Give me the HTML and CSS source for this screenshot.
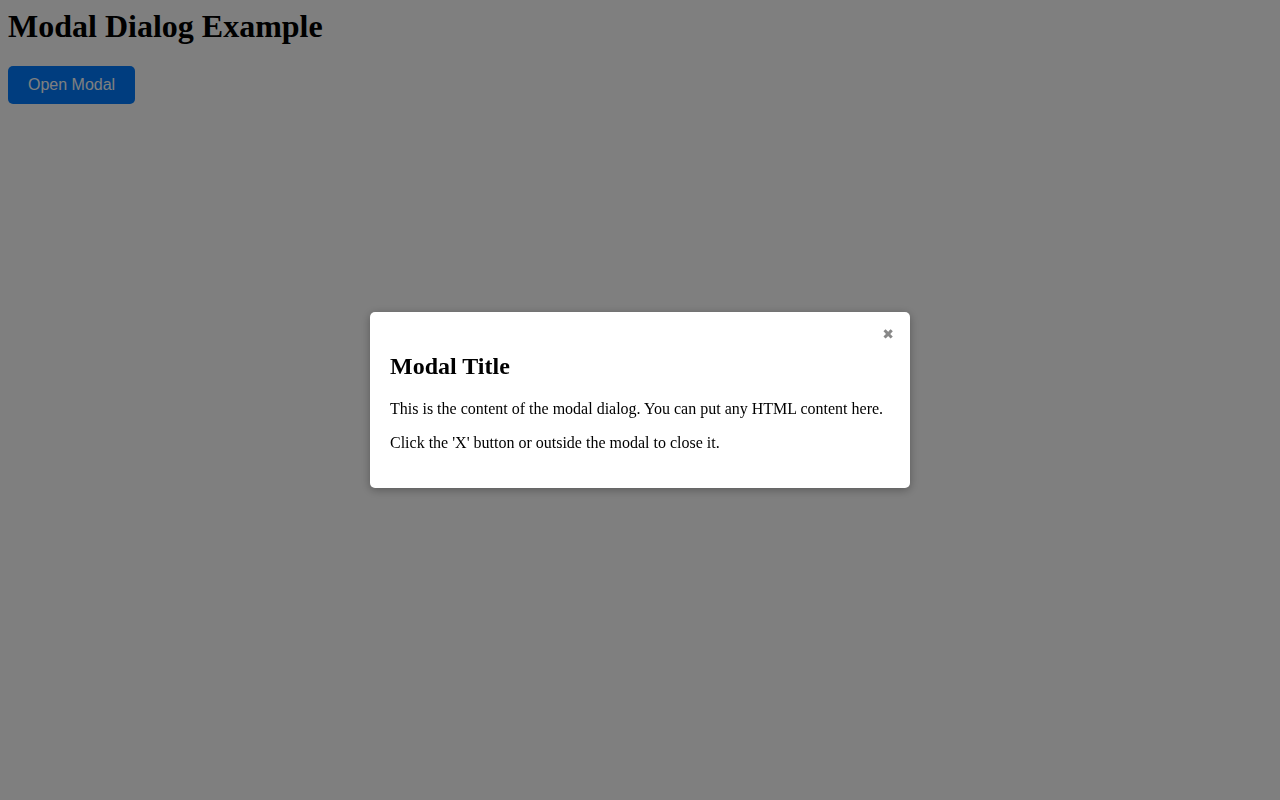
FILE: index.html
```html
<!DOCTYPE html>
<html>
<head>
<meta charset="utf-8">
<title>Modal Dialog Example</title>
<link rel="stylesheet" href="styles.css">
</head>
<body>
<h1 class="page-title">Modal Dialog Example</h1>
<button class="open-btn">Open Modal</button>
<div class="overlay">
  <div class="modal">
    <span class="close">&#10006;</span>
    <h2 class="modal-title">Modal Title</h2>
    <p class="modal-text">This is the content of the modal dialog. You can put any HTML content here.</p>
    <p class="modal-text">Click the 'X' button or outside the modal to close it.</p>
  </div>
</div>
</body>
</html>
```
FILE: styles.css
```css
html, body {
  height: 100%;
}
body {
  margin: 8px;
  font-family: "Liberation Serif", "Times New Roman", serif;
  background: #ffffff;
  color: #000;
}
.page-title {
  font-size: 32px;
  font-weight: bold;
  margin: 0 0 21.44px 0;
}
.open-btn {
  font-family: "Liberation Sans", Arial, sans-serif;
  font-size: 16px;
  padding: 10px 20px;
  background: #007bff;
  color: #ffffff;
  border: none;
  border-radius: 5px;
  cursor: pointer;
}
.overlay {
  position: fixed;
  inset: 0;
  background: rgba(0, 0, 0, 0.5);
  display: flex;
  align-items: center;
  justify-content: center;
}
.modal {
  position: relative;
  background: #ffffff;
  width: 500px;
  padding: 20px;
  border-radius: 5px;
  box-shadow: 0 2px 10px rgba(0, 0, 0, 0.3);
}
.close {
  position: absolute;
  top: 15px;
  right: 16px;
  font-family: "DejaVu Sans", sans-serif;
  font-size: 14px;
  line-height: 1;
  color: #888888;
  cursor: pointer;
}
.modal-title {
  font-size: 24px;
  font-weight: bold;
  line-height: 27.6px;
  margin: 20.92px 0 18.92px 0;
}
.modal-text {
  font-size: 16px;
  margin: 16px 0;
}
```
